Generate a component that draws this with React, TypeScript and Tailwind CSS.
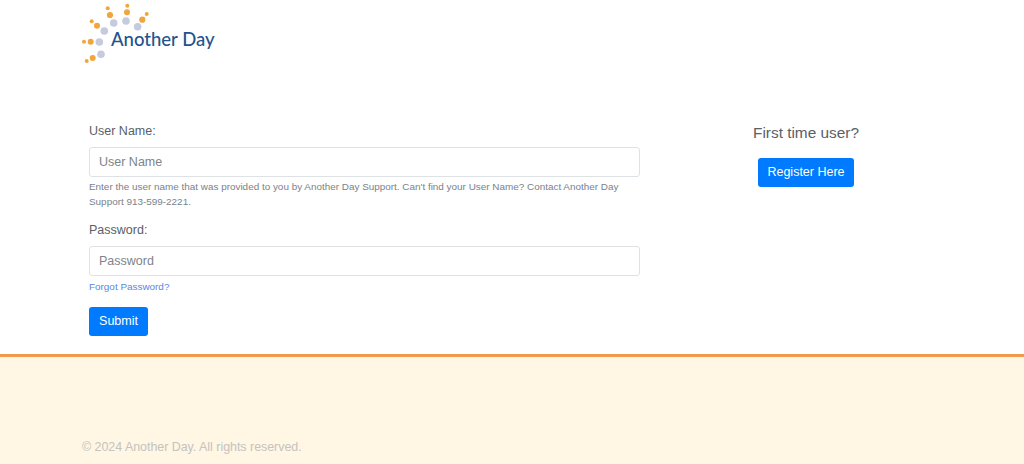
const orangeDots = [
  [107.7, 8.3, 2], [110, 15, 3.1], [127.3, 5.7, 2], [127, 12.3, 3], [146.7, 14, 2], [142.3, 19.7, 3.1],
  [91.7, 21.3, 2], [97, 25.7, 3], [84, 41.7, 2], [90.7, 41.7, 3], [92.7, 58, 3], [86.7, 61, 2],
]
const lavenderDots = [
  [113.7, 23], [126, 21], [137.7, 26.7], [104.3, 31], [99.3, 42], [101, 54.3],
]

function Logo() {
  return (
    <svg width="140" height="68" viewBox="80 0 140 68" className="block">
      {orangeDots.map(([x, y, r], i) => (
        <circle key={i} cx={x} cy={y} r={r} fill="#f0a63c" />
      ))}
      {lavenderDots.map(([x, y], i) => (
        <circle key={i} cx={x} cy={y} r="3.8" fill="#c6cade" />
      ))}
      <text x="111" y="46" fontFamily="Lato, sans-serif" fontSize="18.5" fontWeight="500" fill="#24528c">
        Another Day
      </text>
    </svg>
  )
}

export default function App() {
  return (
    <div className="flex h-[464px] w-[1024px] flex-col overflow-hidden bg-white font-['Liberation_Sans',Arial,sans-serif] text-[12.5px] text-[#5a6066]">
      <header className="h-[122px] pl-[80px]">
        <Logo />
      </header>

      <main className="flex h-[232px] pl-[89px]">
        <form className="w-[551px]">
          <label className="block h-[18px] leading-[18px]">User Name:</label>
          <input
            placeholder="User Name"
            className="mt-[7px] block h-[30px] w-full rounded-[3px] border border-[#dfe2e5] bg-white px-[9px] pb-[1px] text-[12.5px] text-[#495057] placeholder:text-[#7d848a]"
          />
          <p className="mt-[2px] text-[9.92px] leading-[15px] text-[#7a8289]">
            Enter the user name that was provided to you by Another Day Support. Can&apos;t find your User Name? Contact
            Another Day Support 913-599-2221.
          </p>
          <label className="mt-[12px] block h-[18px] leading-[18px]">Password:</label>
          <input
            placeholder="Password"
            className="mt-[7px] block h-[30px] w-full rounded-[3px] border border-[#dfe2e5] bg-white px-[9px] pb-[1px] text-[12.5px] text-[#495057] placeholder:text-[#7d848a]"
          />
          <a href="#" className="mt-[3px] block text-[9.92px] leading-[15px] text-[#5b86e0]">
            Forgot Password?
          </a>
          <button
            type="button"
            className="mt-[13px] h-[29px] w-[59px] rounded-[3px] bg-[#007bff] text-[12.5px] text-white"
          >
            Submit
          </button>
        </form>

        <aside className="ml-[113px] flex w-[106px] flex-col items-center">
          <h2 className="whitespace-nowrap pt-[1px] text-[15.4px] leading-[20px] font-normal text-[#5a6066]">First time user?</h2>
          <button
            type="button"
            className="mt-[15px] h-[29px] w-[96px] shrink-0 whitespace-nowrap rounded-[3px] bg-[#007bff] text-[12.5px] text-white"
          >
            Register Here
          </button>
        </aside>
      </main>

      <footer className="flex flex-1 items-end border-t-[3px] border-[#f2994a] bg-[#fff6e3] pb-[9px] pl-[82px]">
        <p className="text-[12.4px] leading-[16px] text-[#c4c3bf]">© 2024 Another Day. All rights reserved.</p>
      </footer>
    </div>
  )
}
